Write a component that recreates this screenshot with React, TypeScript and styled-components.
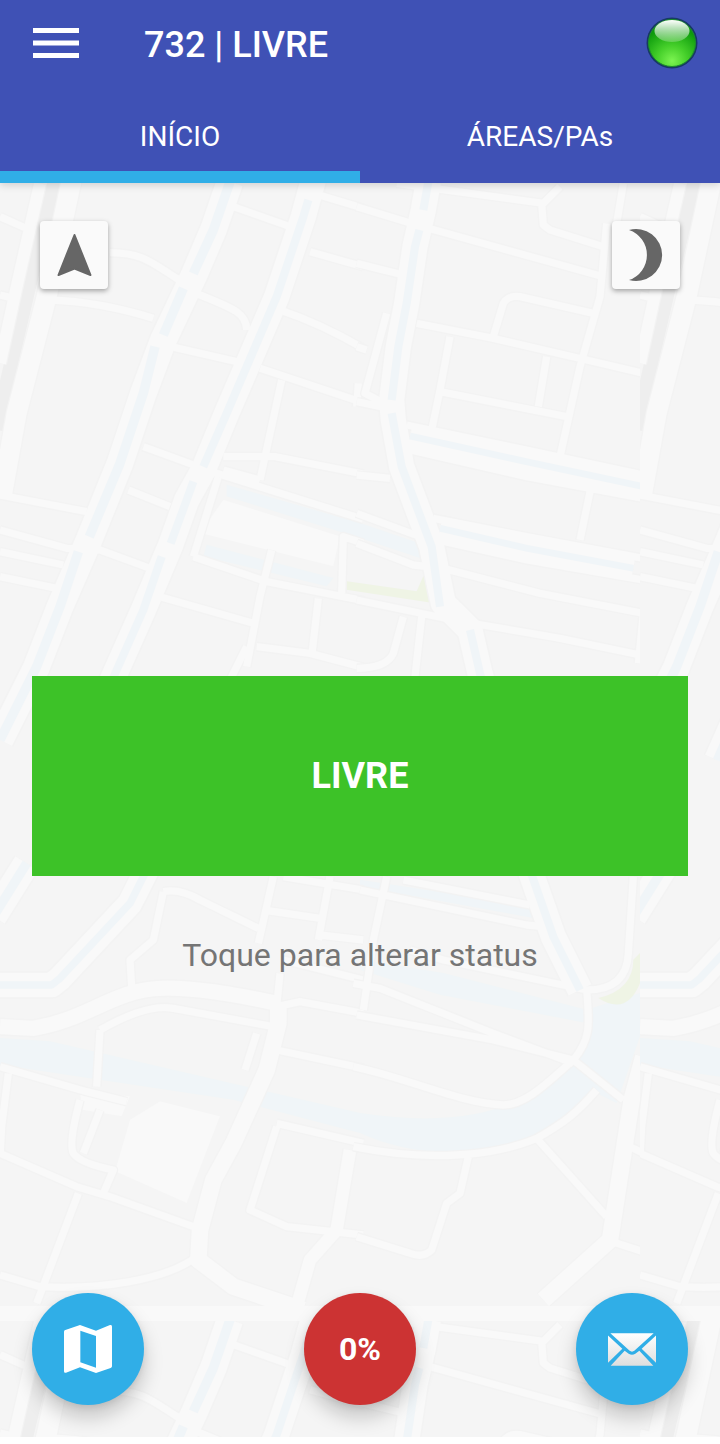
import React, { useState } from "react";
import styled, { createGlobalStyle } from "styled-components";

const GlobalStyle = createGlobalStyle`
  * { box-sizing: border-box; }
  body { margin: 0; background: #fff; font-family: Roboto, "Noto Sans", sans-serif; }
  button { font: inherit; border: 0; padding: 0; cursor: pointer; }
`;

const Screen = styled.div`
  display: flex;
  flex-direction: column;
  min-height: 100vh;
  padding-bottom: 7px;
`;

const Header = styled.header`
  position: relative;
  z-index: 1;
  background: #3f51b5;
  color: #fff;
  box-shadow: 0 2px 8px rgba(0, 0, 0, 0.16);
`;

const AppBar = styled.div`
  display: flex;
  align-items: center;
  height: 88px;
  padding: 0 21px 0 32px;
`;

const MenuButton = styled.button`
  display: flex;
  width: 48px;
  height: 48px;
  align-items: center;
  justify-content: center;
  background: none;
`;

const Title = styled.h1`
  flex: 1;
  margin: 0 0 0 64px;
  padding-top: 2px;
  font-size: 36px;
  line-height: 44px;
  font-weight: 500;
`;

const StatusLight = styled.svg`
  display: block;
  width: 54px;
  height: 54px;
  margin-bottom: 3px;
`;

const Tabs = styled.nav`
  display: flex;
`;

const Tab = styled.button<{ $active: boolean }>`
  flex: 1;
  height: 95px;
  padding-top: 14px;
  border-bottom: 12px solid ${(p) => (p.$active ? "#30aee7" : "transparent")};
  background: none;
  color: #fff;
  font-size: 28px;
  line-height: 32px;
`;

const Main = styled.main`
  position: relative;
  isolation: isolate;
  flex: 1;
  display: flex;
  flex-direction: column;
  background: #f5f5f5;
`;

const MapBackdrop = styled.svg`
  position: absolute;
  inset: 0;
  z-index: -1;
  width: 100%;
  height: 100%;
`;

const Tools = styled.div`
  display: flex;
  justify-content: space-between;
  padding: 38px 40px 0;
`;

const ToolButton = styled.button`
  width: 68px;
  height: 68px;
  border-radius: 4px;
  background: #fafafa;
  box-shadow: 0 2px 5px rgba(0, 0, 0, 0.34);
  svg { display: block; }
`;

const Status = styled.section`
  flex: 1;
  display: flex;
  flex-direction: column;
  justify-content: center;
  gap: 60px;
  padding: 68px 32px 0;
`;

const StatusButton = styled.button`
  height: 200px;
  background: #3dc228;
  color: #fff;
  font-size: 36px;
  font-weight: 700;
`;

const Hint = styled.p`
  margin: 0;
  color: #757575;
  font-size: 32px;
  line-height: 38px;
  text-align: center;
`;

const Actions = styled.div`
  display: flex;
  justify-content: space-between;
  padding: 0 32px 32px;
`;

const Fab = styled.button<{ $color: string }>`
  display: flex;
  align-items: center;
  justify-content: center;
  width: 112px;
  height: 112px;
  border-radius: 50%;
  background: ${(p) => p.$color};
  color: #fff;
  font-size: 32px;
  font-weight: 700;
  box-shadow: 0 12px 20px rgba(0, 0, 0, 0.2), 0 2px 6px rgba(0, 0, 0, 0.08);
`;

/* City map artwork, drawn in quadrants of 1080 units and repeated as a tile. */
type Line = { d: string; w?: number };
/* A canal is water with a bank road on each side; `banks` runs unbroken across its bridges. */
type Canal = { d: string; banks?: string; w: number };
type Area = { x: number; y: number; roads: Line[]; canals: Canal[] };

const areas: Area[] = [
  {
    x: 0,
    y: -9,
    roads: [
      { d: "M0 110L90 150M0 345L30 352M150 360Q300 365 460 415" },
      { d: "M330 218C430 220 450 245 530 295L600 345C700 385 740 400 740 450" },
      { d: "M700 80L870 140M940 40L1090 85M930 215L1090 260M840 390Q960 430 1090 505" },
      { d: "M470 490L710 545M780 565L1090 668M845 600L780 900M670 830L825 830L1090 882" },
      { d: "M430 800L650 880L1090 1018M385 930L510 980M670 870L780 900" },
      { d: "M0 945L260 995M0 1050L200 1105L300 1110L450 1165M0 1115L190 1155M0 1190L170 1225" },
      { d: "M580 1130L800 1205L1090 1262M480 1250L760 1330M815 1110L780 1250L740 1460M955 1255L935 1430M770 1400L930 1420L1090 1462" },
      { d: "M655 890L580 1130M1025 1240L1030 1070L1090 1090M740 1400L690 1500" },
      { d: "M1075 610L1070 680" },
      { d: "M120 10L50 320L0 550", w: 36 },
      { d: "M215 0L140 350L50 700L5 950", w: 60 },
    ],
    canals: [
      {
        d: "M690 5L640 150L580 280M550 325L490 465M465 500L430 640L360 850L268 1070M235 1115L180 1280L110 1460L0 1680",
        banks: "M690 5L640 150L580 290L490 480L430 640L360 850L268 1078L180 1280L110 1460L0 1680",
        w: 28,
      },
      {
        d: "M925 60L910 110L830 350L740 560L680 700L610 860M580 905L560 960L512 1090M485 1130L430 1290L350 1470L230 1740",
        banks: "M940 0L910 110L830 350L740 560L680 700L610 870L560 960L512 1095L430 1290L350 1470L230 1740",
        w: 24,
      },
    ],
  },
  {
    x: 1080,
    y: -9,
    roads: [
      { d: "M-10 80L170 135L730 290M110 10L550 70L600 20M545 70L550 135L570 150L730 200M790 10L770 130" },
      { d: "M-10 250L130 285M-10 500L20 510M170 430L400 475L680 540L850 580M400 470L430 370Q445 345 480 350L700 400" },
      { d: "M740 130L720 350L660 560L600 830M270 470L240 630L215 750M560 530L535 680M240 635L620 710" },
      { d: "M80 400L15 640L110 690M-10 665L110 690M-10 885L90 895" },
      { d: "M140 735L500 810L850 885M150 810L500 890L850 955M690 935L660 1080" },
      { d: "M220 1015L500 1070L850 1135M230 1080L500 1140L850 1200" },
      { d: "M-10 1000L180 1070M-10 1090L160 1155L250 1165L540 1240L850 1300L835 1450" },
      { d: "M-10 1260L280 1320L600 1375L840 1425M130 1310L100 1420Q80 1465 -10 1465M185 1310L165 1490" },
    ],
    canals: [
      {
        d: "M205 5L190 90M178 150L165 200L140 370L115 500L95 660M95 700L125 860L170 980L215 1100L240 1280M330 1350L360 1480L480 1900",
        banks: "M205 5L190 90L165 200L140 370L115 500L95 660L100 720L125 860L170 980L215 1100L250 1270L330 1350L360 1480L480 1900",
        w: 24,
      },
      { d: "M150 768L500 845L850 920", w: 20 },
      { d: "M240 1045L500 1105L820 1165", w: 20 },
    ],
  },
  {
    x: 0,
    y: 2031,
    roads: [
      { d: "M490 95L460 240L390 300L395 380M490 95Q540 85 600 120L775 205M820 50L775 250M790 150L960 175M990 50L955 240M850 50L1090 90M960 225L1090 240M850 300L1090 360" },
      { d: "M0 500L100 505C260 480 340 390 480 385Q600 380 830 430", w: 46 },
      { d: "M300 510Q440 430 520 445L820 500M300 510L290 680M840 340L830 440L900 425L1090 460M830 570L1090 625" },
      { d: "M0 620L260 695L380 725M25 640L5 800L0 890M0 880L230 980L330 1010L580 1100" },
      { d: "M240 720Q205 850 220 880Q240 910 340 930L310 1000M300 750L250 880M235 1000L110 1330M0 1245L120 1280C300 1290 500 1260 590 1190" },
      { d: "M835 430L835 490L800 630L700 850L640 960L600 1110L595 1200L700 1280L910 1350", w: 50 },
      { d: "M770 520L735 630M830 800L750 1050L860 1100L1090 1125M830 790L1090 850" },
      { d: "M1050 870L1010 1110L930 1200L890 1340", w: 38 },
    ],
    canals: [
      { d: "M-20 375L155 375L180 355L390 130L440 30", w: 22 },
      { d: "M-20 170L80 10", w: 28 },
    ],
  },
  {
    x: 1080,
    y: 2031,
    roads: [
      { d: "M80 50L40 240L10 450M0 90L500 195L550 200M130 60L510 135M-20 370L60 385L400 520L640 610M-10 465L400 540L640 600" },
      { d: "M-20 620C130 650 300 730 430 735C500 735 570 660 640 600C690 540 690 500 680 390" },
      { d: "M150 270L250 300L680 390Q800 390 805 280L820 50M640 600L790 720" },
      { d: "M-20 860C200 905 400 890 530 835C610 790 650 760 710 690M530 835L740 1070" },
      { d: "M325 890L300 1000L260 1030L215 1170Q190 1195 150 1180L-10 1130M740 1140L850 1175M810 860L850 880" },
      { d: "M850 590L815 720L750 1140L550 1320", w: 50 },
    ],
    canals: [{ d: "M510 30L580 230L660 390", w: 24 }],
  },
];

function CityMap() {
  return (
    <MapBackdrop aria-hidden="true">
      <defs>
        <pattern id="city" width="640" height="1138" patternUnits="userSpaceOnUse" viewBox="0 0 1920 3414">
          <rect width="1920" height="3414" fill="#f5f5f5" />
          <g fill="none" stroke="#eeeeee" strokeWidth="42">
            <path d="M165 -9L85 320L20 600L-10 740" />
          </g>
          <g fill="#f0f5f8">
            <path d="M0 2565L150 2575L1080 2790Q1370 2835 1550 2755L1740 2620L1760 2480L1920 2430V2560L1850 2760L1790 2730Q1600 2920 1350 2910Q1200 2905 1080 2850L700 2750L0 2645Z" />
            <path d="M1080 2330L1330 2370L1760 2480V2520L1320 2435L1080 2360Z" />
            <path d="M1080 2090L1600 2170V2205L1080 2110Z" />
            <path d="M680 905L1080 1020L1300 1095L1305 1140L1080 1065L680 940Z" />
            <path d="M620 1085L1000 1185L980 1210L610 1120Z" />
          </g>
          <g fill="#f9f9f9">
            <path d="M670 950L1020 1060L1000 1150L600 1050Z" />
            <path d="M390 2810L480 2755L660 2800L560 3060L345 2965Z" />
            <path d="M240 2725L390 2740L365 2800L245 2780Z" />
          </g>
          <g fill="#eff4e5">
            <path d="M1040 1195L1250 1225L1270 1180L1305 1185L1315 1262L1040 1220Z" />
            <path d="M1920 2310V2400Q1880 2500 1795 2445Q1900 2420 1900 2330Z" />
          </g>
          {areas.map((area) => (
            <g
              key={`${area.x}-${area.y}`}
              transform={`translate(${area.x} ${area.y})`}
              fill="none"
              strokeLinejoin="round"
            >
              {area.canals.map((c) => (
                <path key={c.d} d={c.banks ?? c.d} stroke="#f3f3f3" strokeWidth={c.w + 60} />
              ))}
              {area.roads.map((r) => (
                <path key={r.d} d={r.d} stroke="#f3f3f3" strokeWidth={(r.w ?? 22) + 7} />
              ))}
              {area.canals.map((c) => (
                <path key={c.d + "road"} d={c.banks ?? c.d} stroke="#f9f9f9" strokeWidth={c.w + 52} />
              ))}
              {area.roads.map((r) => (
                <path key={r.d + "road"} d={r.d} stroke="#f9f9f9" strokeWidth={r.w ?? 22} />
              ))}
              {area.canals.map((c) => (
                <path key={c.d + "water"} d={c.d} stroke="#f0f5f8" strokeWidth={c.w} />
              ))}
            </g>
          ))}
          <rect y="3369" width="1920" height="45" fill="#f9f9f9" />
        </pattern>
      </defs>
      <rect width="100%" height="100%" fill="url(#city)" />
    </MapBackdrop>
  );
}

function MenuIcon() {
  return (
    <svg width="48" height="48" viewBox="0 0 48 48" fill="#fff" aria-hidden="true">
      <path d="M1 8h46v5H1zM1 20.500h46v5H1zM1 33h46v5H1z" />
    </svg>
  );
}

function GreenLight() {
  return (
    <StatusLight viewBox="0 0 54 54" role="img" aria-label="Conectado">
      <defs>
        <radialGradient id="orb" cx=".5" cy=".88" r=".72">
          <stop offset="0" stopColor="#7cf451" />
          <stop offset=".45" stopColor="#45cf2a" />
          <stop offset="1" stopColor="#0c9a0c" />
        </radialGradient>
        <linearGradient id="gloss" x1="0" y1="0" x2="0" y2="1">
          <stop offset="0" stopColor="#fff" />
          <stop offset="1" stopColor="#fff" stopOpacity=".22" />
        </linearGradient>
      </defs>
      <circle cx="27" cy="27" r="25.500" fill="#173a63" />
      <circle cx="27" cy="27" r="23.500" fill="url(#orb)" stroke="#1d8f2c" />
      <ellipse cx="27" cy="15" rx="17.500" ry="11" fill="url(#gloss)" />
    </StatusLight>
  );
}

function ArrowIcon() {
  return (
    <svg width="68" height="68" viewBox="0 0 68 68" fill="#666" stroke="#666" strokeWidth="2" strokeLinejoin="round" aria-hidden="true">
      <path d="M34.500 14L50.500 54L34.500 47.500L18.500 54Z" />
    </svg>
  );
}

function MoonIcon() {
  return (
    <svg width="68" height="68" viewBox="0 0 68 68" fill="#666" aria-hidden="true">
      <path d="M17 9A26 26 0 1 1 17 59A26.400 26.400 0 0 0 17 9Z" />
    </svg>
  );
}

function MapIcon() {
  return (
    <svg width="48" height="48" viewBox="0 0 144 144" fill="#fff" aria-hidden="true">
      <path fillRule="evenodd" d="M4 15L48 0L96 17L138 0Q144 -1 144 5V124Q144 128 140 129L96 144L48 127L6 143Q0 145 0 139V20Q0 16 4 15ZM49 17V112L96 128V33Z" />
    </svg>
  );
}

function MailIcon() {
  return (
    <svg width="48" height="33" viewBox="0 0 144 98" aria-hidden="true">
      <defs>
        <linearGradient id="paper" x1="0" y1="0" x2="0" y2="98" gradientUnits="userSpaceOnUse">
          <stop offset="0" stopColor="#fff" />
          <stop offset="1" stopColor="#dedede" />
        </linearGradient>
      </defs>
      <path fill="url(#paper)" d="M7 0H137L79 53Q72 58 65 53ZM0 7L43 47L0 89ZM144 7V89L101 47ZM8 98L50 53L62 62Q72 68 82 62L94 53L136 98Z" />
    </svg>
  );
}

export default function App() {
  const [tab, setTab] = useState(0);
  return (
    <Screen>
      <GlobalStyle />
      <Header>
        <AppBar>
          <MenuButton aria-label="Menu">
            <MenuIcon />
          </MenuButton>
          <Title>732 | LIVRE</Title>
          <GreenLight />
        </AppBar>
        <Tabs>
          {["INÍCIO", "ÁREAS/PAs"].map((label, i) => (
            <Tab key={label} $active={tab === i} onClick={() => setTab(i)}>
              {label}
            </Tab>
          ))}
        </Tabs>
      </Header>
      <Main>
        <CityMap />
        <Tools>
          <ToolButton aria-label="Minha localização">
            <ArrowIcon />
          </ToolButton>
          <ToolButton aria-label="Modo noturno">
            <MoonIcon />
          </ToolButton>
        </Tools>
        <Status>
          <StatusButton>LIVRE</StatusButton>
          <Hint>Toque para alterar status</Hint>
        </Status>
        <Actions>
          <Fab $color="#30aee7" aria-label="Mapa">
            <MapIcon />
          </Fab>
          <Fab $color="#cc3333">0%</Fab>
          <Fab $color="#30aee7" aria-label="Mensagens">
            <MailIcon />
          </Fab>
        </Actions>
      </Main>
    </Screen>
  );
}
